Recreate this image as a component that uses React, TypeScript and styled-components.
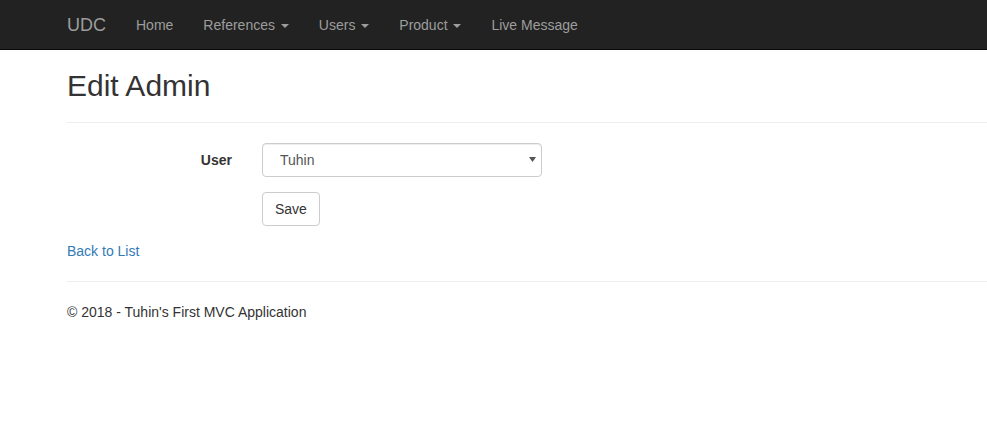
import React from "react";
import styled, { createGlobalStyle } from "styled-components";

const Global = createGlobalStyle`
  html, body { margin: 0; padding: 0; }
  body {
    font-family: "Liberation Sans", Arial, Helvetica, sans-serif;
    font-size: 14px;
    line-height: 1.42857143;
    color: #333;
    background: #fff;
    overflow-x: hidden;
    padding-top: 50px;
  }
  * { box-sizing: border-box; }
`;

const Navbar = styled.nav`
  position: fixed;
  top: 0;
  left: 0;
  right: 0;
  height: 50px;
  background: #222;
  border-bottom: 1px solid #080808;
  z-index: 10;
`;

const Container = styled.div`
  margin-left: 52px;
  padding: 0 0 0 15px;
`;

const NavInner = styled(Container)`
  display: flex;
  align-items: stretch;
  height: 50px;
`;

const Brand = styled.a`
  display: block;
  height: 50px;
  padding: 15px;
  margin-left: -15px;
  font-size: 18px;
  line-height: 20px;
  color: #9d9d9d;
  text-decoration: none;
`;

const NavList = styled.ul`
  display: flex;
  list-style: none;
  margin: 0;
  padding: 0;
`;

const NavLink = styled.a`
  display: block;
  padding: 15px;
  line-height: 20px;
  color: #9d9d9d;
  text-decoration: none;
`;

const Caret = styled.span`
  display: inline-block;
  width: 0;
  height: 0;
  margin-left: 2px;
  vertical-align: middle;
  border-top: 4px solid;
  border-right: 4px solid transparent;
  border-left: 4px solid transparent;
`;

const Title = styled.h2`
  margin: 20px 0 10px;
  font-size: 30px;
  font-weight: 500;
  line-height: 32px;
`;

const Rule = styled.hr`
  margin: 20px 0;
  border: 0;
  border-top: 1px solid #eee;
`;

const Form = styled.form`
  margin-left: -15px;
`;

const FormGroup = styled.div`
  display: grid;
  grid-template-columns: 195px 1fr;
  margin-bottom: 15px;
`;

const Label = styled.label`
  padding: 7px 15px 0;
  text-align: right;
  font-weight: bold;
`;

const Field = styled.div`
  padding: 0 15px;
`;

const SelectWrap = styled.div`
  position: relative;
  width: 280px;
`;

const Select = styled.select`
  display: block;
  width: 280px;
  height: 34px;
  padding: 6px 12px 6px 17px;
  font-family: inherit;
  font-size: 14px;
  color: #555;
  background: #fff;
  border: 1px solid #ccc;
  border-radius: 4px;
  box-shadow: inset 0 1px 1px rgba(0, 0, 0, 0.075);
  appearance: none;
  -webkit-appearance: none;
  outline: none;
`;

const Arrow = styled.svg`
  position: absolute;
  right: 6px;
  top: 14px;
  pointer-events: none;
`;

const Button = styled.button`
  display: inline-block;
  height: 34px;
  padding: 6px 12px;
  font-family: inherit;
  font-size: 14px;
  line-height: 20px;
  color: #333;
  background: #fff;
  border: 1px solid #ccc;
  border-radius: 4px;
`;

const Link = styled.a`
  color: #337ab7;
  text-decoration: none;
`;

const Footer = styled.footer`
  p { margin: 0 0 10px; }
`;

export default function App() {
  return (
    <>
      <Global />
      <Navbar>
        <NavInner>
          <Brand href="#">UDC</Brand>
          <NavList>
            <li><NavLink href="#">Home</NavLink></li>
            <li><NavLink href="#">References <Caret /></NavLink></li>
            <li><NavLink href="#">Users <Caret /></NavLink></li>
            <li><NavLink href="#">Product <Caret /></NavLink></li>
            <li><NavLink href="#">Live Message</NavLink></li>
          </NavList>
        </NavInner>
      </Navbar>
      <Container>
        <Title>Edit Admin</Title>
        <Rule />
        <Form>
          <FormGroup>
            <Label>User</Label>
            <Field>
              <SelectWrap>
                <Select defaultValue="Tuhin">
                  <option>Tuhin</option>
                </Select>
                <Arrow width="7" height="5" viewBox="0 0 7 5">
                  <path d="M0 0 L7 0 L3.5 5 Z" fill="#555" />
                </Arrow>
              </SelectWrap>
            </Field>
          </FormGroup>
          <FormGroup>
            <span />
            <Field>
              <Button type="button">Save</Button>
            </Field>
          </FormGroup>
        </Form>
        <div>
          <Link href="#">Back to List</Link>
        </div>
        <Rule />
        <Footer>
          <p>© 2018 - Tuhin's First MVC Application</p>
        </Footer>
      </Container>
    </>
  );
}
